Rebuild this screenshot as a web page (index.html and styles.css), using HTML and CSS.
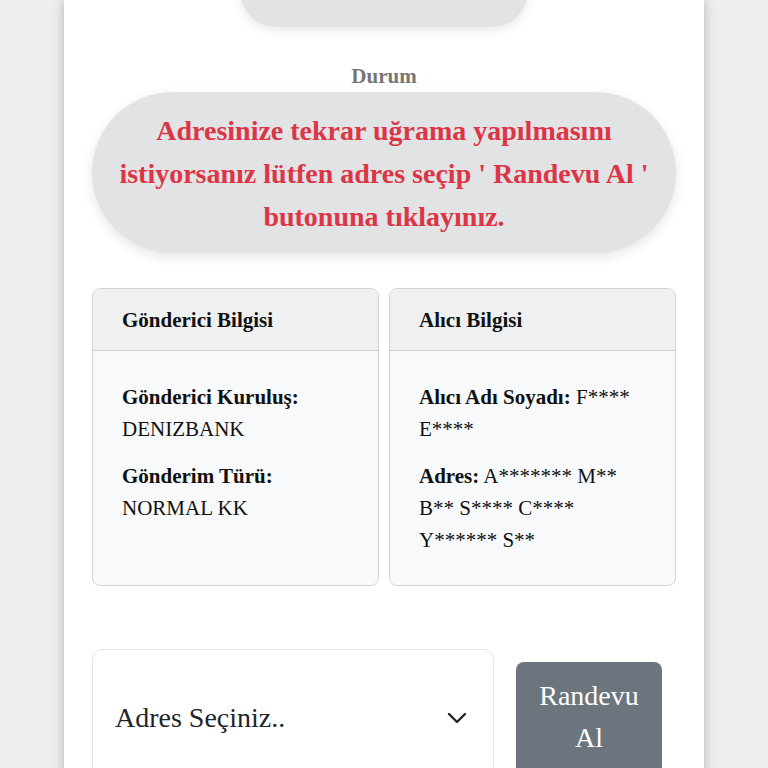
FILE: index.html
```html
<!DOCTYPE html>
<html lang="tr">
<head>
    <meta charset="UTF-8">
    <meta name="viewport" content="width=device-width, initial-scale=1.0">
    <title>Gönderi Takip</title>
    <link rel="stylesheet" href="styles.css">
</head>
<body>

    <div class="page">
        <div class="top-pill"></div>

        <h6 class="status-label">Durum</h6>
        <div class="status-box">
            Adresinize tekrar uğrama yapılmasını istiyorsanız lütfen adres seçip ' Randevu Al ' butonuna tıklayınız.
        </div>

        <div class="info-row">
            <div class="info-card">
                <div class="info-head">Gönderici Bilgisi</div>
                <div class="info-body">
                    <p><strong>Gönderici Kuruluş:</strong><br>DENIZBANK</p>
                    <p><strong>Gönderim Türü:</strong><br>NORMAL KK</p>
                </div>
            </div>
            <div class="info-card">
                <div class="info-head">Alıcı Bilgisi</div>
                <div class="info-body">
                    <p><strong>Alıcı Adı Soyadı:</strong> F**** E****</p>
                    <p><strong>Adres:</strong> A******* M** B** S**** C**** Y****** S**</p>
                </div>
            </div>
        </div>

        <div class="action-row">
            <div class="address-select">
                <span>Adres Seçiniz..</span>
                <svg width="20" height="12" viewBox="0 0 20 12">
                    <path d="M2 2 L10 10 L18 2" fill="none" stroke="#222" stroke-width="2.4" stroke-linecap="round" stroke-linejoin="round"/>
                </svg>
            </div>
            <button class="btn-randevu">Randevu Al</button>
        </div>
    </div>

</body>
</html>
```

FILE: styles.css
```css
body {
    margin: 0;
    background-color: #efefef;
    font-family: "Liberation Serif", "Times New Roman", serif;
    color: #212529;
}
.page {
    width: 640px;
    height: 800px;
    margin: 0 auto;
    background-color: #fff;
    box-shadow: 0 0 12px rgba(0, 0, 0, 0.25);
    padding: 0 28px;
    box-sizing: border-box;
    overflow: hidden;
}
.top-pill {
    width: 288px;
    height: 70px;
    margin: -43px auto 0;
    background-color: #e2e3e5;
    border-radius: 0 0 36px 36px;
    box-shadow: 0 4px 10px rgba(0, 0, 0, 0.08);
}
.status-label {
    margin: 37px 0 0;
    height: 24px;
    line-height: 24px;
    text-align: center;
    font-size: 21px;
    font-weight: bold;
    color: #777;
}
.status-box {
    margin-top: 4px;
    padding: 17px 20px 15px;
    background-color: #e2e3e5;
    border-radius: 82px;
    text-align: center;
    font-size: 28px;
    line-height: 43px;
    font-weight: bold;
    color: #dc3545;
    box-shadow: 0 4px 12px rgba(0, 0, 0, 0.1);
}
.info-row {
    display: grid;
    grid-template-columns: 1fr 1fr;
    gap: 10px;
    margin-top: 35px;
}
.info-card {
    border: 1.5px solid #d3d4d6;
    border-radius: 8px;
    background-color: #f8f9fa;
    overflow: hidden;
}
.info-head {
    height: 61px;
    line-height: 62px;
    padding: 0 29px;
    background-color: #eff0f1;
    border-bottom: 1.5px solid #cfd0d2;
    font-size: 21px;
    font-weight: bold;
    color: #111;
}
.info-body {
    padding: 30px 29px 29px;
    font-size: 21px;
    line-height: 32px;
    color: #111;
}
.info-body p {
    margin: 0 0 15px;
}
.info-body p:last-child {
    margin-bottom: 0;
}
.action-row {
    display: flex;
    align-items: flex-start;
    gap: 22px;
    margin-top: 63px;
}
.address-select {
    width: 402px;
    height: 140px;
    box-sizing: border-box;
    border: 1.5px solid #e3e3e3;
    border-radius: 10px;
    display: flex;
    align-items: center;
    justify-content: space-between;
    padding: 0 26px 2px 22px;
    font-size: 28px;
    color: #212529;
}
.btn-randevu {
    margin-top: 13px;
    width: 146px;
    height: 120px;
    padding: 13px 10px 0;
    display: flex;
    flex-direction: column;
    justify-content: flex-start;
    text-align: center;
    border: none;
    border-radius: 8px;
    background-color: #6c757d;
    color: #fff;
    font-family: "Liberation Serif", "Times New Roman", serif;
    font-size: 28px;
    line-height: 42px;
}
```
